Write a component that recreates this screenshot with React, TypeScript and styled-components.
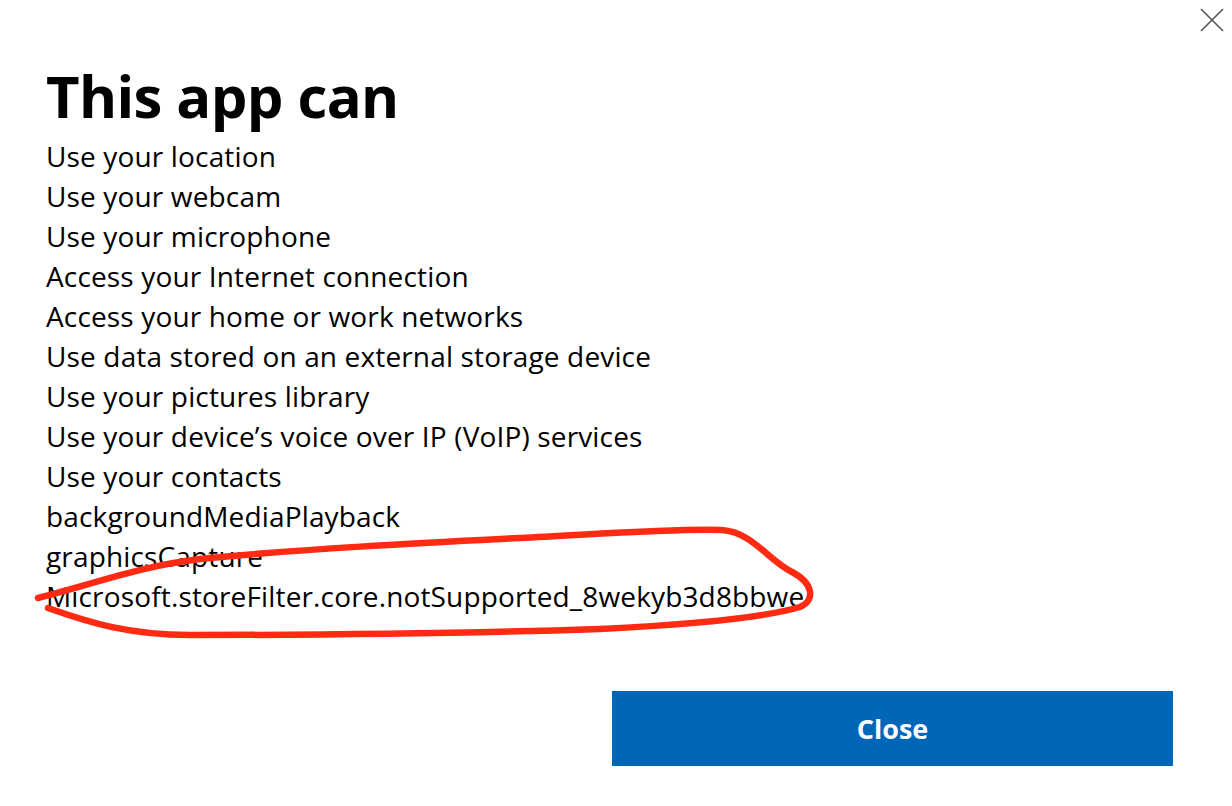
import React from "react";
import styled, { createGlobalStyle } from "styled-components";

const Global = createGlobalStyle`
  html, body { margin: 0; padding: 0; background: #ffffff; }
  body { font-family: "Open Sans", "Noto Sans", sans-serif; color: #000; }
`;

const Dialog = styled.div`
  position: relative;
  width: 1232px;
  height: 806px;
  box-sizing: border-box;
  padding: 66px 59px 0 46px;
  display: flex;
  flex-direction: column;
  overflow: hidden;
`;

const CloseX = styled.button`
  position: absolute;
  top: 6px;
  right: 6px;
  width: 28px;
  height: 28px;
  padding: 0;
  border: 0;
  background: transparent;
  display: flex;
  align-items: center;
  justify-content: center;
`;

const Title = styled.h1`
  margin: 0;
  font-size: 58px;
  line-height: 60px;
  font-weight: 700;
  letter-spacing: -0.6px;
`;

const List = styled.ul`
  list-style: none;
  margin: 10px 0 0 0;
  padding: 0;
`;

const Item = styled.li`
  font-size: 28px;
  line-height: 40px;
  letter-spacing: 0.15px;
  white-space: nowrap;
`;

const Footer = styled.div`
  margin-top: 75px;
  display: flex;
  justify-content: flex-end;
`;

const PrimaryButton = styled.button`
  width: 561px;
  height: 75px;
  border: 0;
  background: #0067b8;
  color: #ffffff;
  font-family: "Open Sans", "Noto Sans", sans-serif;
  font-size: 27px;
  font-weight: 700;
`;

const Scribble = styled.svg`
  position: absolute;
  left: 0;
  top: 0;
  pointer-events: none;
`;

const items = [
  "Use your location",
  "Use your webcam",
  "Use your microphone",
  "Access your Internet connection",
  "Access your home or work networks",
  "Use data stored on an external storage device",
  "Use your pictures library",
  "Use your device\u2019s voice over IP (VoIP) services",
  "Use your contacts",
  "backgroundMediaPlayback",
  "graphicsCapture",
  "Microsoft.storeFilter.core.notSupported_8wekyb3d8bbwe",
];

export default function App() {
  return (
    <>
      <Global />
      <Dialog>
        <CloseX aria-label="Close">
          <svg width="26" height="26" viewBox="0 0 26 26">
            <path d="M2 2 L24 24 M24 2 L2 24" stroke="#5a5a5a" strokeWidth="1.7" fill="none" />
          </svg>
        </CloseX>
        <Title>This app can</Title>
        <List>
          {items.map((t) => (
            <Item key={t}>{t}</Item>
          ))}
        </List>
        <Footer>
          <PrimaryButton>Close</PrimaryButton>
        </Footer>
        <Scribble width="1232" height="806" viewBox="0 0 1232 806">
          <path
            d="M38 598 C 90 585, 140 566, 200 559 C 300 549, 420 543, 520 538 C 600 534, 680 528, 722 530 C 752 532, 768 560, 792 572 C 813 583, 816 600, 800 607 C 760 619, 680 625, 600 629 C 480 633, 330 635, 190 635 C 130 635, 90 623, 48 608"
            stroke="#ff2a12"
            strokeWidth="6.5"
            fill="none"
            strokeLinecap="round"
            strokeLinejoin="round"
          />
        </Scribble>
      </Dialog>
    </>
  );
}
